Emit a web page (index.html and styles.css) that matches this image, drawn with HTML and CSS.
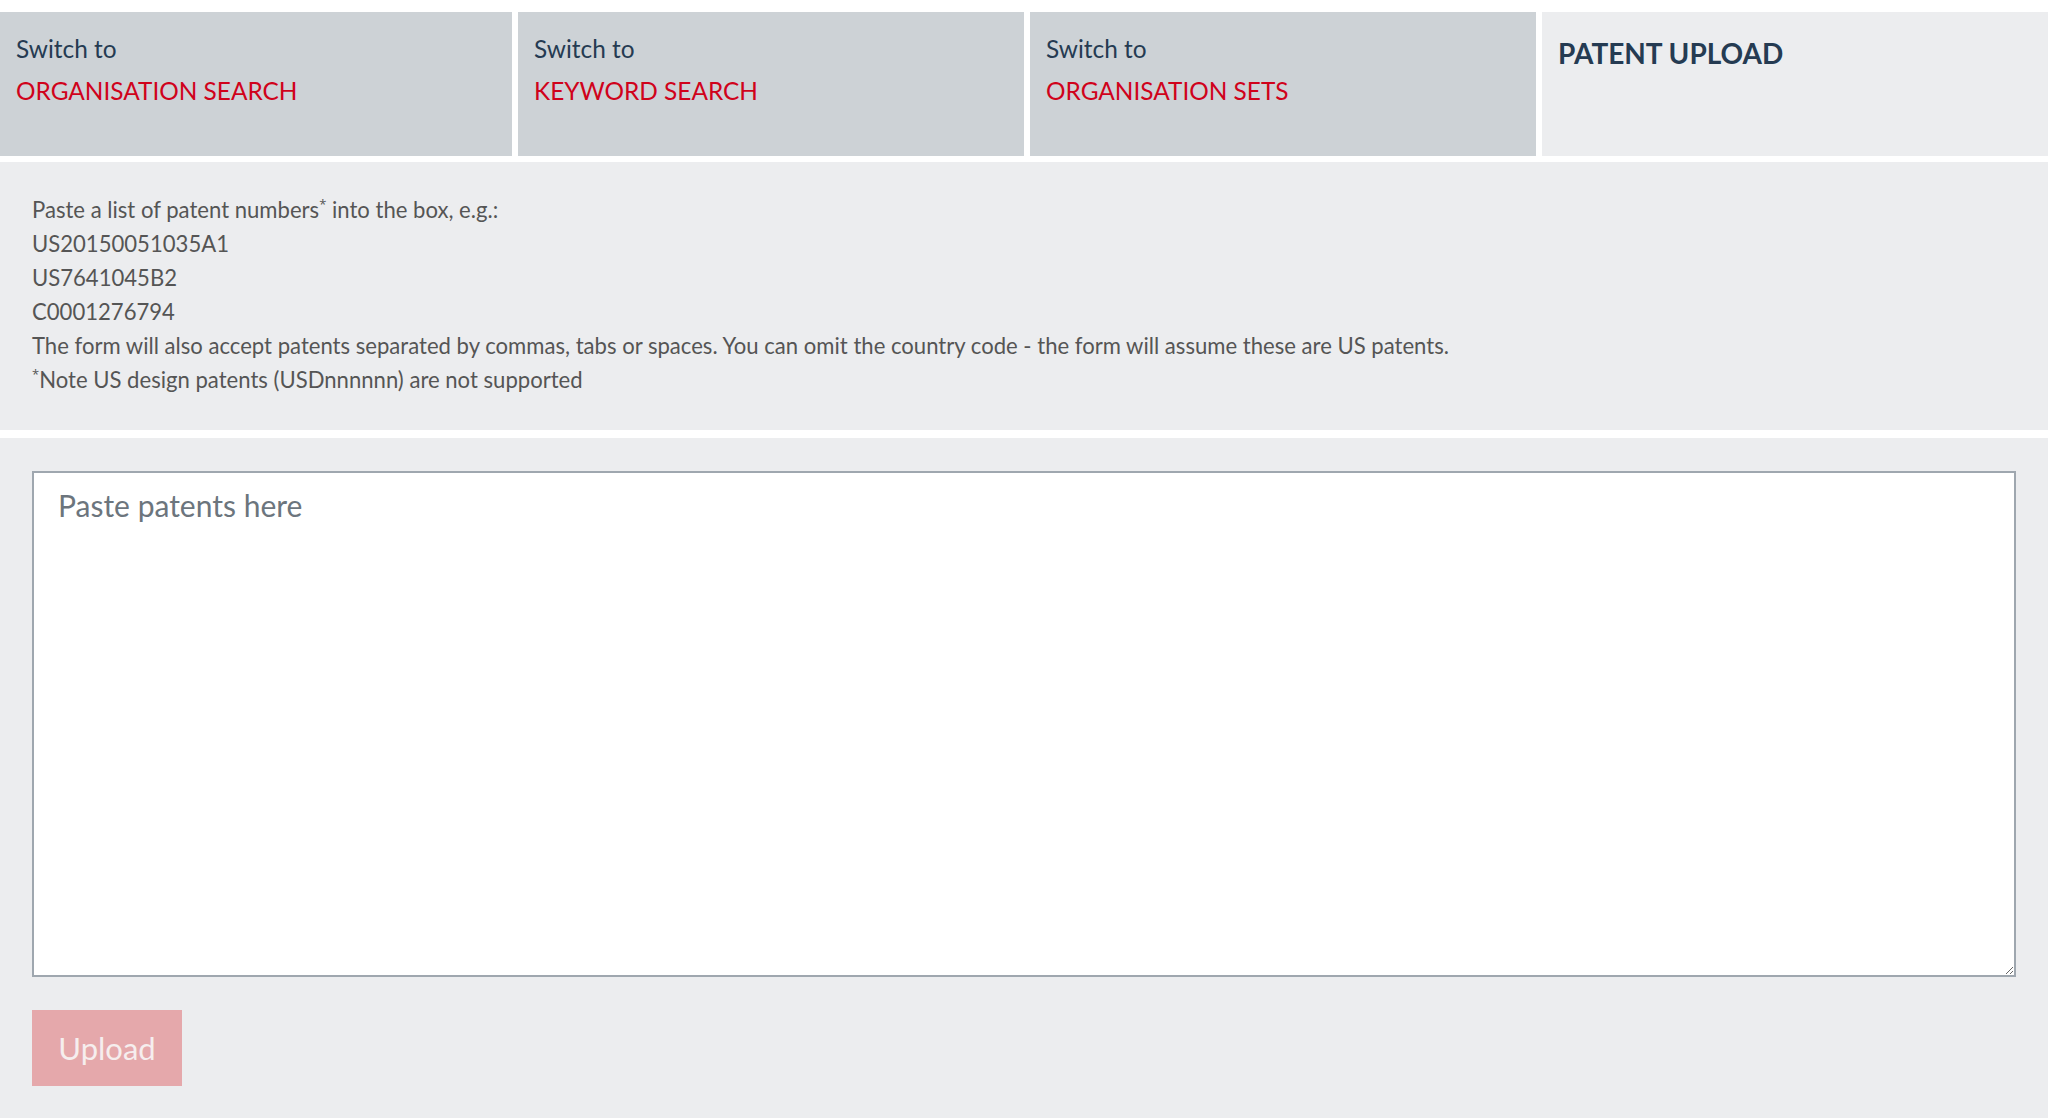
FILE: index.html
```html
<!DOCTYPE html>
<html lang="en">
<head>
  <meta charset="UTF-8" />
  <title>Patent upload</title>
  <link rel="stylesheet" href="styles.css">
</head>
<body>

  <nav class="tabs">
    <a class="tab" href="#">
      <span class="tab-label">Switch to</span>
      <span class="tab-target">ORGANISATION SEARCH</span>
    </a>
    <a class="tab" href="#">
      <span class="tab-label">Switch to</span>
      <span class="tab-target">KEYWORD SEARCH</span>
    </a>
    <a class="tab" href="#">
      <span class="tab-label">Switch to</span>
      <span class="tab-target">ORGANISATION SETS</span>
    </a>
    <div class="tab active">PATENT UPLOAD</div>
  </nav>

  <section class="info">
    <p>Paste a list of patent numbers<sup>*</sup> into the box, e.g.:</p>
    <p>US20150051035A1</p>
    <p>US7641045B2</p>
    <p>C0001276794</p>
    <p>The form will also accept patents separated by commas, tabs or spaces. You can omit the country code - the form will assume these are US patents.</p>
    <p><sup>*</sup>Note US design patents (USDnnnnnn) are not supported</p>
  </section>

  <form class="upload" onsubmit="return false">
    <textarea class="patents" placeholder="Paste patents here" autofocus></textarea>
    <button class="upload-btn" type="submit" disabled>Upload</button>
  </form>

</body>
</html>
```

FILE: styles.css
```css
body {
  margin: 0;
  padding: 12px 2px 0 0;
  font-family: Lato, 'Open Sans', sans-serif;
  background-color: #ffffff;
  color: #555;
}

.tabs {
  display: grid;
  grid-template-columns: repeat(4, 1fr);
}

.tab {
  height: 144px;
  box-sizing: border-box;
  padding: 16px 16px;
  background-color: #cdd2d6;
  text-decoration: none;
  font-size: 24.4px;
  line-height: 42px;
}

.tab + .tab {
  margin-left: 6px;
}

.tab-label {
  display: block;
  color: #253b52;
}

.tab-target {
  display: block;
  color: #d0021b;
}

.tab.active {
  background-color: #ecedef;
  color: #253b52;
  font-weight: bold;
  font-size: 28px;
  padding-top: 20px;
}

.info {
  margin-top: 6px;
  background-color: #ecedef;
  padding: 31px 32px 33px;
  font-size: 22.1px;
  line-height: 34px;
}

.info p {
  margin: 0;
}

.info sup {
  font-family: 'Open Sans', sans-serif;
  font-size: 13px;
  line-height: 0;
  vertical-align: 9px;
}

.upload {
  margin-top: 8px;
  background-color: #ecedef;
  padding: 33px 32px 32px;
  display: flex;
  flex-direction: column;
  align-items: flex-start;
  gap: 33px;
}

.patents {
  width: 100%;
  height: 506px;
  box-sizing: border-box;
  border: 2px solid #9fa7af;
  padding: 14px 24px;
  font-family: Lato, 'Open Sans', sans-serif;
  font-size: 30px;
  color: #333;
  background: #fff;
  outline: none;
}

.patents::placeholder {
  color: #6c757d;
}

.upload-btn {
  width: 150px;
  height: 76px;
  border: none;
  background-color: #e5a8ab;
  color: #f6eeee;
  font-family: Lato, 'Open Sans', sans-serif;
  font-size: 31px;
  padding: 0;
}
```
